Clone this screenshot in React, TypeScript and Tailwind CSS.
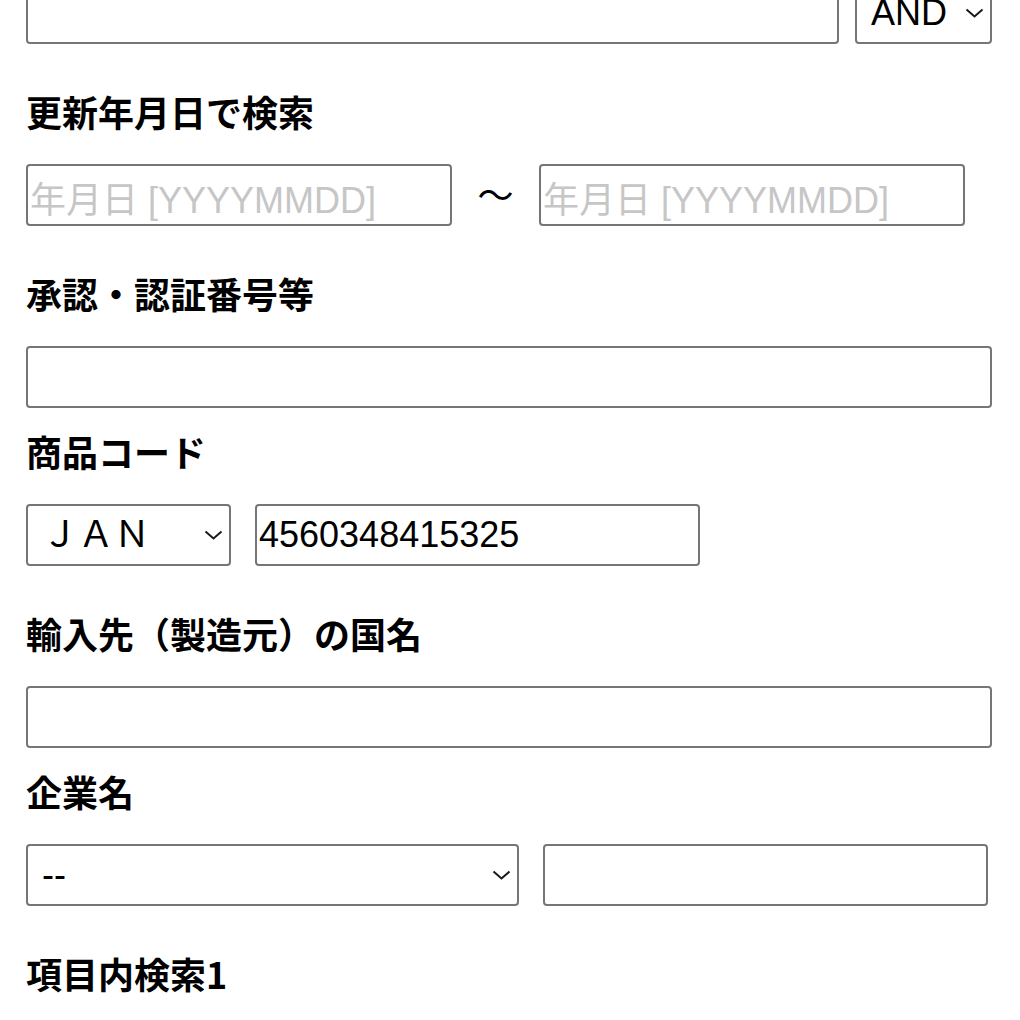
import React from "react";

const inputCls =
  "h-[62px] shrink-0 border-2 border-[#767676] rounded-[4px] px-[2px] text-[36px] font-['Liberation_Sans','Noto_Sans_CJK_JP',sans-serif] text-black bg-white outline-none placeholder:text-[#c6c6c6]";

const labelCls =
  "block text-[36px] leading-[54px] font-bold font-['Noto_Sans_CJK_JP',sans-serif] text-black mb-[26px]";

function Chevron() {
  return (
    <svg
      className="pointer-events-none absolute right-[8px] top-1/2 -translate-y-1/2"
      width="19"
      height="10"
      viewBox="0 0 19 10"
      fill="none"
    >
      <polyline points="1.5,1.5 9.5,8.5 17.5,1.5" stroke="#1a1a1a" strokeWidth="2" />
    </svg>
  );
}

function Select({ width, value, options }: { width: string; value: string; options: string[] }) {
  return (
    <div className={`relative shrink-0 ${width}`}>
      <select
        defaultValue={value}
        className="appearance-none w-full h-[62px] border-2 border-[#767676] rounded-[4px] pl-[14px] pr-[30px] text-[36px] font-['Liberation_Sans','Noto_Sans_CJK_JP',sans-serif] text-black bg-white outline-none"
      >
        {options.map((o) => (
          <option key={o} value={o}>
            {o}
          </option>
        ))}
      </select>
      <Chevron />
    </div>
  );
}

export default function App() {
  return (
    <div className="w-[1020px] h-[1020px] overflow-hidden bg-white px-[26px]">
      <div className="flex gap-[16px] mt-[-18px] mb-[40px]">
        <input type="text" className={`${inputCls} w-[813px]`} />
        <Select width="w-[137px]" value="AND" options={["AND", "OR"]} />
      </div>

      <label className={labelCls}>更新年月日で検索</label>
      <div className="flex items-center mb-[40px]">
        <input type="text" placeholder="年月日 [YYYYMMDD]" className={`${inputCls} w-[426px] pt-[11px] pb-0`} />
        <span className="w-[87px] flex justify-center text-[36px] leading-[36px] font-['Noto_Sans_CJK_JP',sans-serif] text-black -translate-y-[2px]">
          〜
        </span>
        <input type="text" placeholder="年月日 [YYYYMMDD]" className={`${inputCls} w-[426px] pt-[11px] pb-0`} />
      </div>

      <label className={labelCls}>承認・認証番号等</label>
      <div className="flex mb-[16px]">
        <input type="text" className={`${inputCls} w-[966px]`} />
      </div>

      <label className={labelCls}>商品コード</label>
      <div className="flex gap-[24px] mb-[40px]">
        <Select width="w-[205px]" value="ＪＡＮ" options={["ＪＡＮ", "ＩＴＦ"]} />
        <input type="text" defaultValue="4560348415325" className={`${inputCls} w-[445px]`} />
      </div>

      <label className={labelCls}>輸入先（製造元）の国名</label>
      <div className="flex mb-[16px]">
        <input type="text" className={`${inputCls} w-[966px]`} />
      </div>

      <label className={labelCls}>企業名</label>
      <div className="flex gap-[24px] mb-[40px]">
        <Select width="w-[493px]" value="--" options={["--"]} />
        <input type="text" className={`${inputCls} w-[445px]`} />
      </div>

      <label className={labelCls}>項目内検索1</label>
    </div>
  );
}
